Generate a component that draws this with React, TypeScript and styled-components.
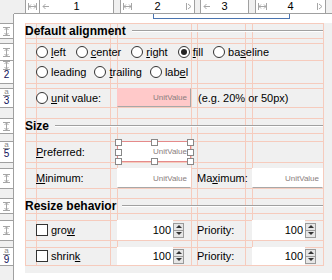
import React from 'react';
import styled, { createGlobalStyle } from 'styled-components';

const PINK = '#f6cbbd';
const HLINE = '#a0a0a0';
const PANEL = '#f0f0f0';

const COLS = [11, 74, 7, 74, 6, 48, 7, 71];
const ROWS = [15, 5, 17, 23, 5, 19, 11, 15, 8, 21, 6, 20, 10, 15, 7, 20, 7, 18];
const colTemplate = COLS.map((w) => `${w}px`).join(' ');
const rowTemplate = ROWS.map((h) => `${h}px`).join(' ');

const Global = createGlobalStyle`
  html, body { margin: 0; padding: 0; background: #fff; }
  body { font-family: "Liberation Sans", Arial, sans-serif; font-size: 11px; color: #000; }
  #root { width: 332px; height: 280px; overflow: hidden; }
`;

const Page = styled.div`
  display: grid;
  grid-template-columns: 14px 318px;
  grid-template-rows: 14px 266px;
  width: 332px;
  height: 280px;
  background: #fff;
`;

const Corner = styled.div`
  background: ${PANEL};
`;

const ColHeader = styled.div`
  display: flex;
  height: 14px;
  box-sizing: border-box;
  border-bottom: 1px solid ${HLINE};
  background: ${PANEL};
`;

const HeadSpacer = styled.div<{ $size: number }>`
  flex: 0 0 ${(p) => p.$size}px;
`;

const HeadCell = styled.div<{ $w: number; $gap?: boolean; $last?: boolean }>`
  flex: 0 0 ${(p) => p.$w}px;
  box-sizing: border-box;
  border-left: 1px solid ${HLINE};
  border-right: ${(p) => (p.$last ? `1px solid ${HLINE}` : 'none')};
  background: ${(p) => (p.$gap ? PANEL : '#fff')};
  display: grid;
  grid-template-columns: 1fr auto 1fr;
  align-items: center;
  padding: 0 2px;
  font-size: 11px;
  line-height: 13px;
`;

const HeadStart = styled.span`
  justify-self: start;
  display: flex;
`;
const HeadEnd = styled.span`
  justify-self: end;
  display: flex;
`;
const HeadNum = styled.span`
  color: #000;
`;

const RowHeader = styled.div`
  display: flex;
  flex-direction: column;
  width: 14px;
  box-sizing: border-box;
  border-right: 1px solid ${HLINE};
  background: ${PANEL};
`;

const RowCell = styled.div<{ $h: number; $gap?: boolean; $top?: boolean }>`
  flex: 0 0 ${(p) => p.$h}px;
  box-sizing: border-box;
  border-top: 1px solid ${HLINE};
  background: ${(p) => (p.$gap ? PANEL : '#fff')};
  display: flex;
  flex-direction: column;
  align-items: center;
  justify-content: ${(p) => (p.$top ? 'flex-start' : 'center')};
  &:last-of-type {
    border-bottom: 1px solid ${HLINE};
  }
`;

const RowNum = styled.span`
  font-size: 10px;
  line-height: 10px;
  height: 10px;
  color: #10105a;
`;

const BaseMark = styled.span`
  display: block;
  font-size: 8px;
  line-height: 6px;
  height: 6px;
  padding: 0 1px;
  color: #888;
  border-bottom: 1px solid #999;
`;

const Canvas = styled.div`
  position: relative;
  background: #fff;
  padding: 9px 0 0 11px;
`;

const Bracket = styled.div`
  position: absolute;
  left: 139px;
  top: 0;
  width: 135px;
  height: 4px;
  border: 1px solid #4a74b0;
  border-top: none;
`;

const Panel = styled.div`
  background: ${PANEL};
  width: 307px;
  height: 250px;
`;

const Grid = styled.div`
  display: grid;
  grid-template-columns: ${colTemplate};
  grid-template-rows: ${rowTemplate};
  width: max-content;
  box-sizing: content-box;
  border-right: 1px solid ${PINK};
  border-bottom: 1px solid ${PINK};
`;

const LineCell = styled.div<{ $r: number; $c: number }>`
  grid-row: ${(p) => p.$r};
  grid-column: ${(p) => p.$c};
  border-left: 1px solid ${PINK};
  border-top: 1px solid ${PINK};
`;

const Place = styled.div<{ $r: number; $c: string }>`
  grid-row: ${(p) => p.$r};
  grid-column: ${(p) => p.$c};
  display: flex;
  align-items: center;
  position: relative;
  min-width: 0;
`;

const Title = styled.div`
  display: flex;
  align-items: center;
  flex: 1;
  gap: 6px;
  font-weight: bold;
  font-size: 12px;
  color: #000;
`;

const Sep = styled.div`
  flex: 1;
  height: 0;
  border-top: 1px solid #a0a0a0;
  border-bottom: 1px solid #fff;
`;

const RadioRow = styled.div<{ $gap: number }>`
  display: flex;
  align-items: center;
  gap: ${(p) => p.$gap}px;
`;

const Option = styled.span`
  display: inline-flex;
  align-items: center;
  gap: 3px;
  white-space: nowrap;
`;

const Radio = styled.span<{ $on?: boolean }>`
  width: 12px;
  height: 12px;
  box-sizing: border-box;
  border-radius: 50%;
  border: 1px solid #333;
  background: #fff;
  display: grid;
  place-items: center;
  &::after {
    content: '';
    width: 6px;
    height: 6px;
    border-radius: 50%;
    background: ${(p) => (p.$on ? '#222' : 'transparent')};
  }
`;

const Check = styled.span`
  width: 12px;
  height: 12px;
  box-sizing: border-box;
  border: 1px solid #333;
  background: #fff;
`;

const U = styled.span`
  text-decoration: underline;
`;

const Label = styled.span`
  white-space: nowrap;
`;

const UnitField = styled.div<{ $pink?: boolean; $selected?: boolean }>`
  flex: 1;
  align-self: stretch;
  box-sizing: border-box;
  display: flex;
  align-items: center;
  justify-content: flex-end;
  padding-right: 3px;
  background: ${(p) => (p.$pink ? '#ffc9c9' : '#fff')};
  border: 1px solid ${(p) => (p.$selected ? '#e58a8a' : 'transparent')};
  border-bottom-color: ${(p) => (p.$selected ? '#e58a8a' : '#a8a8a8')};
  border-right-color: ${(p) => (p.$selected ? '#e58a8a' : p.$pink ? '#a8a8a8' : 'transparent')};
  font-size: 8px;
  color: #8a7e7e;
  position: relative;
`;

const Handle = styled.span<{ $x: string; $y: string }>`
  position: absolute;
  left: ${(p) => p.$x};
  top: ${(p) => p.$y};
  width: 5px;
  height: 5px;
  margin: -3px 0 0 -3px;
  background: #fff;
  border: 1px solid #888;
`;

const Spinner = styled.div`
  display: flex;
  align-items: center;
  align-self: stretch;
  flex: 1;
  padding-right: 7px;
`;

const SpinField = styled.div`
  flex: 1;
  align-self: stretch;
  background: #fff;
  display: flex;
  align-items: center;
  justify-content: flex-end;
  padding-right: 2px;
  font-size: 11px;
`;

const SpinButtons = styled.div`
  width: 11px;
  height: 15px;
  box-sizing: border-box;
  border: 1px solid #9a9a9a;
  background: #e6e6e6;
  display: flex;
  flex-direction: column;
`;

const SpinHalf = styled.div<{ $up?: boolean }>`
  flex: 1;
  display: grid;
  place-items: center;
  border-top: ${(p) => (p.$up ? 'none' : '1px solid #9a9a9a')};
  &::after {
    content: '';
    border-left: 3px solid transparent;
    border-right: 3px solid transparent;
    ${(p) => (p.$up ? 'border-bottom: 3px solid #333;' : 'border-top: 3px solid #333;')}
  }
`;

const Hint = styled.span`
  white-space: nowrap;
  padding-left: 1px;
`;

const HFill = () => (
  <svg width="9" height="7" viewBox="0 0 9 7" fill="none" stroke="#a6a6a6" strokeWidth="1">
    <path d="M0.5 0v7M8.5 0v7M1 3.5h7M3 1.5l-2 2 2 2M6 1.5l2 2-2 2" />
  </svg>
);
const LeftIcon = () => (
  <svg width="7" height="7" viewBox="0 0 7 7" fill="none" stroke="#a6a6a6" strokeWidth="1">
    <path d="M1 3.5h6M3.5 1l-2.5 2.5 2.5 2.5" />
  </svg>
);
const GrowIcon = () => (
  <svg width="6" height="7" viewBox="0 0 6 7" fill="none" stroke="#a6a6a6" strokeWidth="1">
    <path d="M0.5 0v7M2 1l3 2.5-3 2.5" />
  </svg>
);
const VFill = () => (
  <svg width="7" height="9" viewBox="0 0 7 9" fill="none" stroke="#a6a6a6" strokeWidth="1">
    <path d="M0 0.5h7M0 8.5h7M3.5 1v7M1.5 3l2-2 2 2M1.5 6l2 2 2-2" />
  </svg>
);

type HeadDef = { start?: 'fill' | 'left'; num?: string; grow?: boolean; gap?: boolean };
const HEADS: HeadDef[] = [
  { start: 'fill' },
  { start: 'left', num: '1' },
  { gap: true },
  { start: 'fill', num: '2', grow: true },
  { gap: true },
  { start: 'left', num: '3' },
  { gap: true },
  { start: 'fill', num: '4', grow: true },
];

type RowDef = { kind: 'fill' | 'base' | 'gap'; num?: string };
const ROWDEFS: RowDef[] = [
  { kind: 'fill' },
  { kind: 'gap' },
  { kind: 'fill' },
  { kind: 'fill', num: '2' },
  { kind: 'gap' },
  { kind: 'base', num: '3' },
  { kind: 'gap' },
  { kind: 'fill' },
  { kind: 'gap' },
  { kind: 'base', num: '5' },
  { kind: 'gap' },
  { kind: 'fill' },
  { kind: 'gap' },
  { kind: 'fill' },
  { kind: 'gap' },
  { kind: 'fill' },
  { kind: 'gap' },
  { kind: 'base', num: '9' },
];

const SpinBox = ({ value }: { value: string }) => (
  <Spinner>
    <SpinField>{value}</SpinField>
    <SpinButtons>
      <SpinHalf $up />
      <SpinHalf />
    </SpinButtons>
  </Spinner>
);

export default function App() {
  return (
    <>
      <Global />
      <Page>
        <Corner />
        <ColHeader>
          <HeadSpacer $size={11} />
          {HEADS.map((h, i) => (
            <HeadCell key={i} $w={COLS[i]} $gap={h.gap} $last={i === HEADS.length - 1}>
              <HeadStart>{h.start === 'fill' ? <HFill /> : h.start === 'left' ? <LeftIcon /> : null}</HeadStart>
              <HeadNum>{h.num ?? ''}</HeadNum>
              <HeadEnd>{h.grow ? <GrowIcon /> : null}</HeadEnd>
            </HeadCell>
          ))}
        </ColHeader>
        <RowHeader>
          <HeadSpacer $size={9} />
          {ROWDEFS.map((r, i) => (
            <RowCell key={i} $h={ROWS[i]} $gap={r.kind === 'gap'} $top={!!r.num}>
              {r.kind === 'fill' && <VFill />}
              {r.kind === 'base' && <BaseMark>a</BaseMark>}
              {r.num && <RowNum>{r.num}</RowNum>}
            </RowCell>
          ))}
        </RowHeader>
        <Canvas>
          <Bracket />
          <Panel>
            <Grid>
              {ROWS.map((_, r) =>
                COLS.map((__, c) => <LineCell key={`${r}-${c}`} $r={r + 1} $c={c + 1} />)
              )}

              <Place $r={1} $c="1 / -1">
                <Title>
                  Default alignment
                  <Sep />
                </Title>
              </Place>

              <Place $r={3} $c="2 / -1">
                <RadioRow $gap={10}>
                  <Option><Radio /><Label><U>l</U>eft</Label></Option>
                  <Option><Radio /><Label><U>c</U>enter</Label></Option>
                  <Option><Radio /><Label><U>r</U>ight</Label></Option>
                  <Option><Radio $on /><Label><U>f</U>ill</Label></Option>
                  <Option><Radio /><Label>ba<U>s</U>eline</Label></Option>
                </RadioRow>
              </Place>

              <Place $r={4} $c="2 / -1">
                <RadioRow $gap={8}>
                  <Option><Radio /><Label>leadin<U>g</U></Label></Option>
                  <Option><Radio /><Label><U>t</U>railing</Label></Option>
                  <Option><Radio /><Label>lab<U>e</U>l</Label></Option>
                </RadioRow>
              </Place>

              <Place $r={6} $c="2">
                <Option><Radio /><Label><U>u</U>nit value:</Label></Option>
              </Place>
              <Place $r={6} $c="4">
                <UnitField $pink>UnitValue</UnitField>
              </Place>
              <Place $r={6} $c="6 / -1">
                <Hint>(e.g. 20% or 50px)</Hint>
              </Place>

              <Place $r={8} $c="1 / -1">
                <Title>
                  Size
                  <Sep />
                </Title>
              </Place>

              <Place $r={10} $c="2">
                <Label><U>P</U>referred:</Label>
              </Place>
              <Place $r={10} $c="4">
                <UnitField $selected>
                  UnitValue
                  <Handle $x="0%" $y="0%" />
                  <Handle $x="50%" $y="0%" />
                  <Handle $x="100%" $y="0%" />
                  <Handle $x="0%" $y="50%" />
                  <Handle $x="100%" $y="50%" />
                  <Handle $x="0%" $y="100%" />
                  <Handle $x="50%" $y="100%" />
                  <Handle $x="100%" $y="100%" />
                </UnitField>
              </Place>

              <Place $r={12} $c="2">
                <Label><U>M</U>inimum:</Label>
              </Place>
              <Place $r={12} $c="4">
                <UnitField>UnitValue</UnitField>
              </Place>
              <Place $r={12} $c="6">
                <Label>Ma<U>x</U>imum:</Label>
              </Place>
              <Place $r={12} $c="8">
                <UnitField>UnitValue</UnitField>
              </Place>

              <Place $r={14} $c="1 / -1">
                <Title>
                  Resize behavior
                  <Sep />
                </Title>
              </Place>

              <Place $r={16} $c="2">
                <Option><Check /><Label>gro<U>w</U></Label></Option>
              </Place>
              <Place $r={16} $c="4">
                <SpinBox value="100" />
              </Place>
              <Place $r={16} $c="6">
                <Label>Priority:</Label>
              </Place>
              <Place $r={16} $c="8">
                <SpinBox value="100" />
              </Place>

              <Place $r={18} $c="2">
                <Option><Check /><Label>shrin<U>k</U></Label></Option>
              </Place>
              <Place $r={18} $c="4">
                <SpinBox value="100" />
              </Place>
              <Place $r={18} $c="6">
                <Label>Priority:</Label>
              </Place>
              <Place $r={18} $c="8">
                <SpinBox value="100" />
              </Place>
            </Grid>
          </Panel>
        </Canvas>
      </Page>
    </>
  );
}
